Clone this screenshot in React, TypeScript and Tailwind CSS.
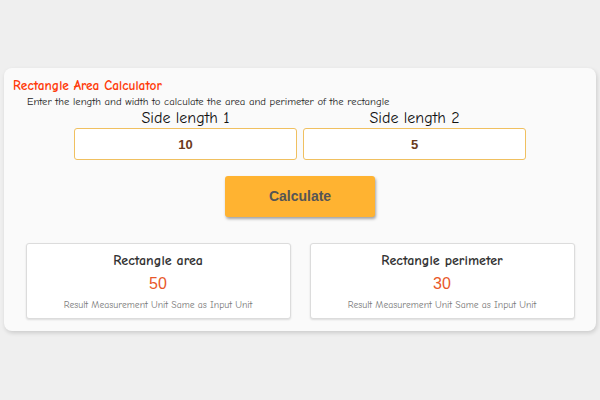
import React, { useState } from 'react';

const comic = "font-['Comic_Sans_MS','Comic_Neue','Open_Sans',sans-serif]";

const ResultCard: React.FC<{ title: string; value: number }> = ({ title, value }) => (
  <div className="w-[265px] h-[76px] bg-white border border-[#dcdcdc] rounded-[3px] shadow-[0_1px_2px_rgba(0,0,0,0.12)] flex flex-col items-center pt-[7px]">
    <div className={`${comic} text-[14px] font-bold text-[#333] leading-[20px]`}>{title}</div>
    <div className="font-['Liberation_Sans',sans-serif] text-[16px] text-[#e8582a] leading-[20px] mt-[3px]">{value}</div>
    <div className={`${comic} text-[9.7px] text-[#777] leading-[12px] mt-[5px]`}>
      Result Measurement Unit Same as Input Unit
    </div>
  </div>
);

const App: React.FC = () => {
  const [a, setA] = useState<string>('10');
  const [b, setB] = useState<string>('5');
  const [area, setArea] = useState<number>(50);
  const [perimeter, setPerimeter] = useState<number>(30);

  const handleCalc = () => {
    const x = parseFloat(a) || 0;
    const y = parseFloat(b) || 0;
    setArea(x * y);
    setPerimeter(2 * (x + y));
  };

  return (
    <div className="w-[600px] h-[400px] bg-[#efefef] pt-[68px] px-[4px]">
      <div className="h-[263px] bg-[#fafafa] rounded-[8px] shadow-[1px_2px_4px_rgba(0,0,0,0.15)] pt-[10px]">
        <h2 className={`${comic} ml-[9px] text-[13.4px] font-bold text-[#ff3a0a] leading-[16px]`}>
          Rectangle Area Calculator
        </h2>
        <p className={`${comic} ml-[23px] text-[10.7px] text-[#222] leading-[14px] mt-[1px]`}>
          Enter the length and width to calculate the area and perimeter of the rectangle
        </p>

        <div className="flex justify-center gap-[6px]">
          <div className="flex flex-col items-center">
            <label className={`${comic} text-[16px] text-[#111] leading-[18px]`}>Side length 1</label>
            <input
              value={a}
              onChange={(e) => setA(e.target.value)}
              className="w-[223px] h-[32px] mt-[1px] bg-white border border-[#f0c060] rounded-[3px] text-center font-['Liberation_Sans',sans-serif] text-[13px] font-bold text-[#6b3a1c] outline-none"
            />
          </div>
          <div className="flex flex-col items-center">
            <label className={`${comic} text-[16px] text-[#111] leading-[18px]`}>Side length 2</label>
            <input
              value={b}
              onChange={(e) => setB(e.target.value)}
              className="w-[223px] h-[32px] mt-[1px] bg-white border border-[#f0c060] rounded-[3px] text-center font-['Liberation_Sans',sans-serif] text-[13px] font-bold text-[#6b3a1c] outline-none"
            />
          </div>
        </div>

        <div className="flex justify-center mt-[16px]">
          <button
            onClick={handleCalc}
            className="w-[150px] h-[41px] bg-[#ffb331] rounded-[3px] shadow-[1px_2px_3px_rgba(0,0,0,0.35)] font-['Liberation_Sans',sans-serif] text-[14px] font-bold text-[#555]"
          >
            Calculate
          </button>
        </div>

        <div className="flex justify-center gap-[19px] mt-[26px]">
          <ResultCard title="Rectangle area" value={area} />
          <ResultCard title="Rectangle perimeter" value={perimeter} />
        </div>
      </div>
    </div>
  );
};

export default App;
